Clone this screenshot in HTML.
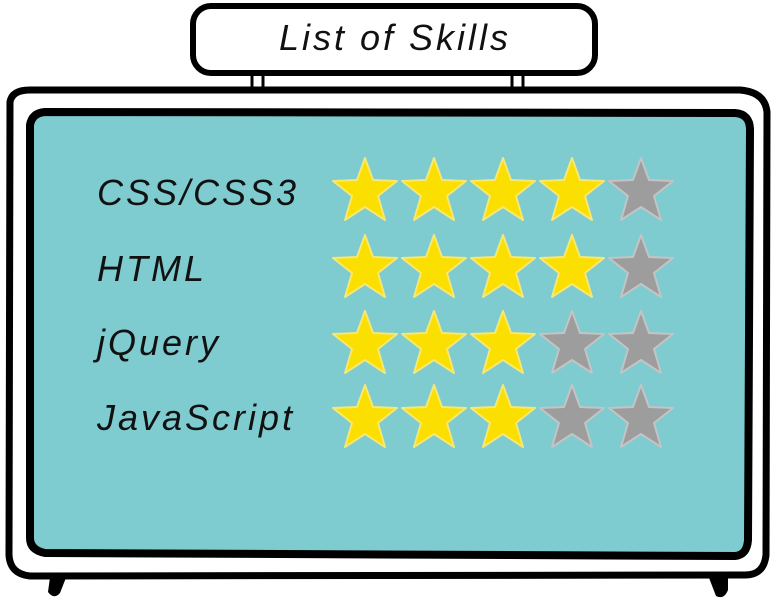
<!DOCTYPE html>
<html><head><meta charset="utf-8"><style>
html,body{margin:0;padding:0;background:#fff;width:774px;height:600px;overflow:hidden}
svg{display:block}
text{font-family:"Liberation Sans",sans-serif;font-style:italic;fill:#111}
</style></head><body>
<svg width="774" height="600" viewBox="0 0 774 600">
<defs>
<path id="st" d="M0,-33 L8,-11 L32,-10 L13,5 L20,29 L0,16 L-20,29 L-13,5 L-32,-10 L-8,-11 Z"/>
</defs>
<rect x="252" y="70" width="11" height="24" fill="#fff" stroke="#000" stroke-width="3"/>
<rect x="512" y="70" width="11" height="24" fill="#fff" stroke="#000" stroke-width="3"/>
<rect x="193" y="6" width="402" height="67" rx="18" fill="#fff" stroke="#000" stroke-width="6"/>
<text x="395" y="50" font-size="36" letter-spacing="3" text-anchor="middle">List of Skills</text>
<path d="M51,570 L48,592 Q54,600 60,593 L69,570 Z" fill="#000"/>
<path d="M706,570 L716,596 Q724,600 728,590 L728,570 Z" fill="#000"/>
<path d="M10,102 Q12,90 30,90 L740,90 Q765,92 767,112 L766,555 Q764,575 745,575 L30,576 Q10,574 9,555 Z" fill="#fff" stroke="#000" stroke-width="7"/>
<path d="M30,125 Q32,113 45,112 L735,113 Q750,114 750,130 L748,540 Q747,555 735,556 L45,553 Q30,550 30,538 Z" fill="#7ecbd0" stroke="#000" stroke-width="8"/>
<g font-size="36" letter-spacing="3">
<text x="97" y="205">CSS/CSS3</text>
<text x="97" y="281">HTML</text>
<text x="97" y="355">jQuery</text>
<text x="97" y="430">JavaScript</text>
</g>
<g stroke-width="2" stroke-linejoin="round">
<g fill="#fbdf00" stroke="#f6e873">
<use href="#st" x="365" y="191"/><use href="#st" x="434" y="191"/><use href="#st" x="503" y="191"/><use href="#st" x="572" y="191"/>
<use href="#st" x="365" y="268"/><use href="#st" x="434" y="268"/><use href="#st" x="503" y="268"/><use href="#st" x="572" y="268"/>
<use href="#st" x="365" y="344"/><use href="#st" x="434" y="344"/><use href="#st" x="503" y="344"/>
<use href="#st" x="365" y="418"/><use href="#st" x="434" y="418"/><use href="#st" x="503" y="418"/>
</g>
<g fill="#9d9d9d" stroke="#c4c4c4">
<use href="#st" x="641" y="191"/><use href="#st" x="641" y="268"/>
<use href="#st" x="572" y="344"/><use href="#st" x="641" y="344"/>
<use href="#st" x="572" y="418"/><use href="#st" x="641" y="418"/>
</g>
</g>
</svg>
</body></html>
